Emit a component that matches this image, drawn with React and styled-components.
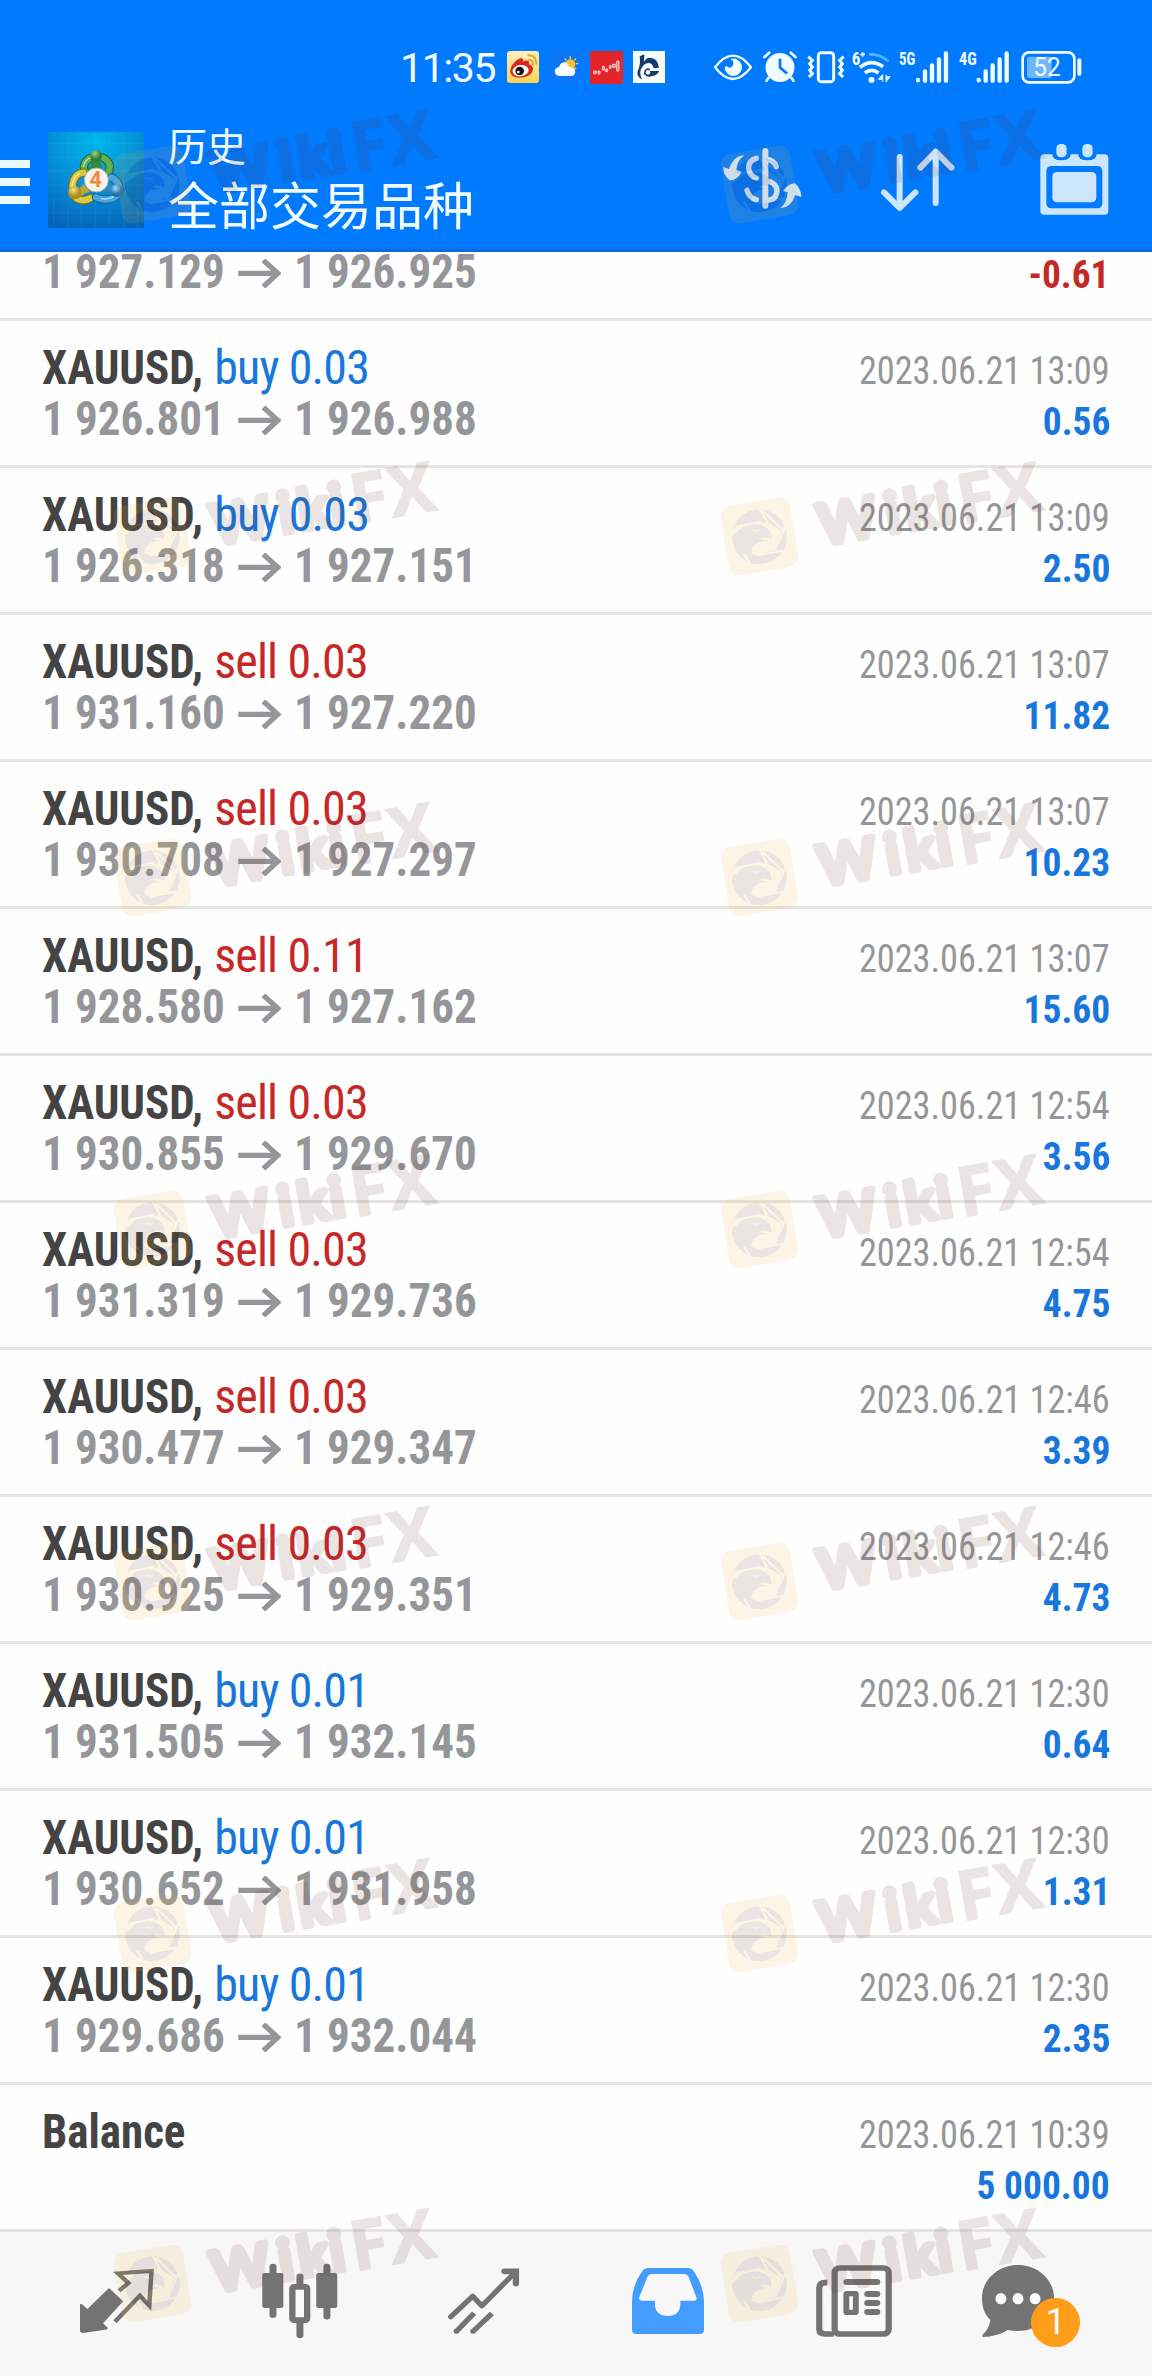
import React from "react";
import styled, { createGlobalStyle } from "styled-components";

const Global = createGlobalStyle`
  * { box-sizing: border-box; }
  body { margin: 0; background: #fefefe; }
`;

const condensed = `"Roboto Condensed", Roboto, "Noto Sans", sans-serif`;
const cjk = `"Noto Sans CJK SC", sans-serif`;

const Screen = styled.div`
  position: relative;
  width: 1152px;
  height: 2376px;
  overflow: hidden;
  display: flex;
  flex-direction: column;
  background: #fefefe;
  font-family: ${condensed};
`;

const Header = styled.header`
  height: 252px;
  flex: none;
  background: #007aff;
  border-bottom: 3px solid #0b6cd8;
  color: #f2fcff;
`;

const StatusBar = styled.div`
  height: 117px;
  padding: 51px 0 0 400px;
  display: flex;
  align-items: flex-start;
`;

const Clock = styled.span`
  width: 107px;
  height: 32px;
  line-height: 34px;
  font-family: Roboto, sans-serif;
  font-size: 41px;
  letter-spacing: -1.4px;
  white-space: nowrap;
`;

const Icon = styled.svg`
  display: block;
  flex: none;
  width: ${(p) => p.$w}px;
  height: ${(p) => p.$h}px;
  margin-left: ${(p) => p.$gap || 0}px;
  margin-top: ${(p) => p.$drop || 0}px;
  overflow: visible;
`;

const AppBar = styled.div`
  height: 132px;
  display: flex;
  align-items: flex-start;
`;

const MenuButton = styled.div`
  width: 30px;
  margin: 43px 18px 0 0;
  display: flex;
  flex-direction: column;
  gap: 10px;
`;

const MenuLine = styled.span`
  height: 8px;
  background: #eaf8ff;
`;

const AppLogo = styled.svg`
  width: 96px;
  height: 96px;
  margin-top: 15px;
  flex: none;
`;

const Titles = styled.div`
  width: 555px;
  margin-left: 24px;
  font-family: ${cjk};
`;

const Subtitle = styled.div`
  font-size: 39px;
  line-height: 54px;
`;

const Title = styled.div`
  margin-top: 1px;
  font-size: 51px;
  line-height: 62px;
`;

const History = styled.main`
  height: 1980px;
  flex: none;
  overflow: hidden;
  display: flex;
  flex-direction: column;
  justify-content: flex-end;
`;

const Row = styled.div`
  height: 147px;
  flex: none;
  padding: 21px 42px 0;
  border-bottom: 3px solid #e4e4e4;
`;

const Line = styled.div`
  height: 51px;
  display: flex;
  justify-content: space-between;
  align-items: baseline;
  line-height: 51px;
  white-space: pre;
`;

const Deal = styled.span`
  font-size: 48px;
  font-stretch: condensed;
  letter-spacing: -0.85px;
  color: ${(p) => p.$color};
`;

const Symbol = styled.b`
  display: inline-block;
  margin-right: -10.7px;
  color: #444;
  font-weight: 700;
  letter-spacing: 0;
  transform: scaleX(0.9375);
  transform-origin: left;
`;

const Prices = styled.span`
  display: flex;
  align-items: baseline;
  font-size: 48px;
  font-weight: 700;
  font-stretch: condensed;
  transform: scaleX(0.9375);
  transform-origin: left;
  color: #959699;
`;

const Arrow = styled.svg`
  width: 46px;
  height: 29px;
  margin: 0 14px 0 14px;
`;

const Time = styled.span`
  font-size: 39px;
  font-stretch: condensed;
  transform: scaleX(0.93);
  transform-origin: right;
  color: #959699;
`;

const Profit = styled.span`
  font-size: 39px;
  font-weight: 700;
  font-stretch: condensed;
  transform: scaleX(0.96);
  transform-origin: right;
  color: ${(p) => (p.$loss ? "#c62828" : "#1777dd")};
`;

const Nav = styled.nav`
  height: 144px;
  flex: none;
  padding: 0 24px 6px;
  display: flex;
  background: #f7f7f7;
`;

const Tab = styled.div`
  width: 184px;
  display: flex;
  align-items: center;
  justify-content: center;
`;

const ChatBox = styled.div`
  position: relative;
  width: 108px;
`;

const Count = styled.span`
  position: absolute;
  left: 49px;
  top: 33px;
  width: 49px;
  height: 49px;
  border-radius: 50%;
  background: #ff9d1a;
  color: #fff;
  font-family: Roboto, sans-serif;
  font-size: 36px;
  line-height: 49px;
  text-align: center;
`;

const Mark = styled.svg`
  position: absolute;
  left: ${(p) => p.$x}px;
  top: ${(p) => p.$y}px;
  width: 330px;
  height: 82px;
  overflow: visible;
  opacity: 0.12;
  pointer-events: none;
`;

const BUY = "#1777dd";
const SELL = "#c62828";

const deals = [
  ["buy 0.03", "1 927.129", "1 926.925", "2023.06.21 13:09", "-0.61"],
  ["buy 0.03", "1 926.801", "1 926.988", "2023.06.21 13:09", "0.56"],
  ["buy 0.03", "1 926.318", "1 927.151", "2023.06.21 13:09", "2.50"],
  ["sell 0.03", "1 931.160", "1 927.220", "2023.06.21 13:07", "11.82"],
  ["sell 0.03", "1 930.708", "1 927.297", "2023.06.21 13:07", "10.23"],
  ["sell 0.11", "1 928.580", "1 927.162", "2023.06.21 13:07", "15.60"],
  ["sell 0.03", "1 930.855", "1 929.670", "2023.06.21 12:54", "3.56"],
  ["sell 0.03", "1 931.319", "1 929.736", "2023.06.21 12:54", "4.75"],
  ["sell 0.03", "1 930.477", "1 929.347", "2023.06.21 12:46", "3.39"],
  ["sell 0.03", "1 930.925", "1 929.351", "2023.06.21 12:46", "4.73"],
  ["buy 0.01", "1 931.505", "1 932.145", "2023.06.21 12:30", "0.64"],
  ["buy 0.01", "1 930.652", "1 931.958", "2023.06.21 12:30", "1.31"],
  ["buy 0.01", "1 929.686", "1 932.044", "2023.06.21 12:30", "2.35"],
];

const markRows = [144, 496, 837, 1189, 1541, 1893, 2243];

function Watermark({ x, y }) {
  return (
    <Mark $x={x} $y={y} viewBox="0 0 330 82">
      <rect x="5.5" y="5.5" width="70" height="70" rx="10" fill="#f0b432" transform="rotate(-9.5 40.5 40.5)" />
      <g transform="translate(-19.5 -40.7) scale(.3333)" strokeLinecap="butt">
        <circle cx="180" cy="244" r="82" fill="#612f28" />
        <path d="M104 214 L202 200 L246 226 L226 284 L172 300 L120 290 L96 240 Z" fill="#f0b432" />
        <path
          d="M98 240 C112 232 122 222 132 214 C150 202 190 206 206 222 C214 228 218 244 214 255 C206 246 194 246 182 248 C184 254 196 256 206 257 C180 256 160 268 156 286 C154 302 166 316 182 326 C140 328 98 296 98 240 Z"
          fill="#612f28"
        />
        <path d="M158 222 Q168 232 182 224" fill="none" stroke="#f0b432" strokeWidth="4" />
        <path d="M180 160 L204 202 M108 214 L186 199 M262 204 L224 290 M250 286 L172 300 M190 166 L254 228 M134 296 L150 322" fill="none" stroke="#f0b432" strokeWidth="7" />
      </g>
      <g transform="translate(101 50.5) rotate(-9.8)" fill="#612f28">
        <text x="2 70 90 122" y="-1" fontFamily="Lato" fontWeight="700" fontSize="56" stroke="#612f28" strokeWidth="6" strokeLinejoin="round">
          Wiki
        </text>
        <text x="143 182" y="2" fontFamily="Open Sans" fontWeight="700" fontSize="69" stroke="#612f28" strokeWidth="1.500">
          FX
        </text>
      </g>
    </Mark>
  );
}

function StatusIcons() {
  const w = "#f0fcff";
  return (
    <>
      <Icon $w={32} $h={32} viewBox="0 0 96 96">
        <defs>
          <linearGradient id="weibo" x2="0" y2="1">
            <stop offset="0" stopColor="#fff0c4" />
            <stop offset="1" stopColor="#ffd34f" />
          </linearGradient>
        </defs>
        <rect width="96" height="96" rx="10" fill="url(#weibo)" />
        <path d="M10 58 C12 44 26 26 40 22 C48 21 50 26 48 32 C58 26 70 28 66 40 C80 44 82 58 72 68 C58 82 24 84 14 72 C10 67 9 63 10 58Z" fill="#db2a1c" />
        <ellipse cx="41" cy="59" rx="24" ry="17" fill="#fff" transform="rotate(-8 41 59)" />
        <circle cx="38" cy="60" r="13" fill="#15100c" />
        <circle cx="34" cy="63" r="4" fill="#fff" />
        <path d="M66 26 Q78 26 78 42 M64 13 Q88 12 88 38" fill="none" stroke="#eda42c" strokeWidth="6" strokeLinecap="round" />
      </Icon>
      <Icon $w={32} $h={32} $gap={10} viewBox="0 0 96 96">
        <rect width="96" height="96" rx="18" fill="#0a75f5" />
        <path d="M64 16v8M47 22l5 6M81 22l-5 6M88 38h-8M82 54l-6-4" stroke="#ffd34c" strokeWidth="4" />
        <circle cx="64" cy="40" r="15" fill="#ffc027" />
        <path d="M34 75 C12 75 12 50 30 48 C34 28 60 30 60 48 C84 46 84 75 66 75Z" fill="#f8fcff" />
      </Icon>
      <Icon $w={33} $h={33} $gap={9} viewBox="0 0 99 99">
        <rect width="99" height="99" rx="5" fill="#e1252b" />
        <path d="M11 60h8v8h-8zM24 60h6v9h-6zM37 46h6v11h-6zM46 54h7v8h-7zM58 44h5v8h-5zM67 40h9v9h-9zM80 30h7v30h-7z" fill="#fff" fillOpacity=".4" stroke="#fff" strokeOpacity=".85" strokeWidth="2.500" />
      </Icon>
      <Icon $w={32} $h={32} $gap={10} viewBox="0 0 96 96">
        <rect width="96" height="96" fill="#f7fdff" />
        <path d="M34 10 L20 16 Q24 40 14 60 Q10 78 28 86 Q18 70 24 54 Q34 34 48 36 Q60 38 62 52 L78 50 Q74 20 50 20 Q40 20 33 32Z" fill="#173a68" />
        <path d="M78 60 H50 Q52 50 44 52 Q32 56 33 68 Q40 80 56 76 Q76 72 78 60Z" fill="#173a68" />
        <circle cx="45" cy="64" r="7" fill="#f7fdff" />
      </Icon>
      <Icon $w={38} $h={27} $gap={49} $drop={3} viewBox="42 71 114 81">
        <path d="M45 111 Q99 41 153 111 Q99 181 45 111Z" fill="none" stroke={w} strokeWidth="7" strokeLinejoin="round" />
        <path d="M92 86 A26 26 0 1 1 74 112 Q76 108 80 107 Q90 118 98 106 Q104 92 92 86Z" fill={w} />
      </Icon>
      <Icon $w={34} $h={31} $gap={11} viewBox="190 65 100 92">
        <circle cx="240" cy="114" r="43" fill={w} />
        <path d="M194 83l14-13M286 83l-14-13M206 145l-6 8M274 145l6 8" stroke={w} strokeWidth="8" strokeLinecap="round" />
        <path d="M240 88v26l21 18" fill="none" stroke="#007aff" strokeWidth="8" />
      </Icon>
      <Icon $w={38} $h={32} $gap={10} viewBox="321 63 114 96">
        <rect x="355" y="68" width="46" height="87" rx="9" fill="none" stroke={w} strokeWidth="9" />
        <path d="M325 80l12 11-8 10 8 10-8 10 8 10-10 10M431 80l-12 11 8 10-8 10 8 10-8 10 10 10" fill="none" stroke={w} strokeWidth="9" />
      </Icon>
      <Icon $w={39} $h={32} $gap={7} viewBox="458 63 118 96">
        <text x="457" y="104" fontFamily={condensed} fontWeight="700" fontSize="54" textLength="26" lengthAdjust="spacingAndGlyphs" fill={w}>6</text>
        <path d="M483 73h14M490 66v14" stroke={w} strokeWidth="5" />
        <path d="M509 72 Q545 72 568 94" fill="none" stroke="#58b0ff" strokeWidth="8" />
        <path d="M482 112 Q516 84 552 110M497 129 Q517 113 538 129" fill="none" stroke={w} strokeWidth="11" />
        <circle cx="517" cy="150" r="9" fill={w} />
        <path d="M551 156v-22l-13 14h12M561 134v22l12-16h-11" fill={w} stroke={w} strokeWidth="3" />
      </Icon>
      <Icon $w={50} $h={32} $gap={8} viewBox="600 63 150 96">
        <text x="600" y="105" fontFamily={condensed} fontWeight="700" fontSize="57" textLength="49" lengthAdjust="spacingAndGlyphs" fill={w}>5G</text>
        <path d="M657 150v1M678 124v28M699 106v46M720 88v64M741 70v82" stroke={w} strokeWidth="13" strokeLinecap="round" />
      </Icon>
      <Icon $w={51} $h={32} $gap={10} viewBox="781 63 153 96">
        <text x="781" y="105" fontFamily={condensed} fontWeight="700" fontSize="57" textLength="53" lengthAdjust="spacingAndGlyphs" fill={w}>4G</text>
        <path d="M840 150v1M861 124v28M882 106v46M903 88v64M924 70v82" stroke={w} strokeWidth="13" strokeLinecap="round" />
      </Icon>
      <Icon $w={61} $h={32} $gap={11} viewBox="966 63 183 96">
        <rect x="971" y="67" width="155" height="90" rx="19" fill="none" stroke={w} strokeWidth="8" />
        <rect x="984" y="80" width="74" height="64" rx="7" fill="#72b5ff" />
        <path d="M1141 91v40" stroke={w} strokeWidth="12" strokeLinecap="round" />
        <text x="1003" y="138" fontFamily="Roboto" fontSize="75" textLength="82" lengthAdjust="spacingAndGlyphs" fill={w}>52</text>
      </Icon>
    </>
  );
}

function Logo() {
  return (
    <AppLogo viewBox="0 0 288 288">
      <defs>
        <radialGradient id="sky" cx=".5" cy=".1" r=".95">
          <stop offset="0" stopColor="#00b6ee" />
          <stop offset=".55" stopColor="#058bd4" />
          <stop offset="1" stopColor="#0564b8" />
        </radialGradient>
        <radialGradient id="green" cx=".4" cy=".3"><stop offset="0" stopColor="#9bd48a" /><stop offset="1" stopColor="#2a7d35" /></radialGradient>
        <radialGradient id="gold" cx=".4" cy=".3"><stop offset="0" stopColor="#f2e37c" /><stop offset="1" stopColor="#a98a1c" /></radialGradient>
        <radialGradient id="azure" cx=".4" cy=".3"><stop offset="0" stopColor="#a5dcfa" /><stop offset="1" stopColor="#1c6fae" /></radialGradient>
      </defs>
      <rect width="288" height="288" fill="url(#sky)" />
      <path d="M18 0v288M60 0v288M101 0v288M143 0v288M185 0v288M227 0v288M269 0v288M0 34h288M0 76h288M0 117h288M0 159h288M0 201h288M0 243h288" stroke="#5ccdf2" strokeOpacity=".18" strokeWidth="2" />
      <g fill="none" strokeLinejoin="round" strokeLinecap="round">
        <path d="M112 120 C98 94 122 74 146 74 C172 74 196 94 180 124" stroke="#23622b" strokeWidth="25" />
        <path d="M112 120 C98 94 122 74 146 74 C172 74 196 94 180 124" stroke="#5fb04e" strokeWidth="19" />
        <path d="M106 122 C78 124 66 158 78 190 C88 208 112 208 128 198" stroke="#7e6b16" strokeWidth="25" />
        <path d="M106 122 C78 124 66 158 78 190 C88 208 112 208 128 198" stroke="#dcc93e" strokeWidth="19" />
        <path d="M190 136 C214 148 222 176 208 190 C192 206 162 206 144 196" stroke="#1b5a91" strokeWidth="25" />
        <path d="M190 136 C214 148 222 176 208 190 C192 206 162 206 144 196" stroke="#46a6e0" strokeWidth="19" />
        <path d="M106 104 Q110 82 130 76 M72 170 Q72 138 94 124 M160 200 Q186 204 204 190" stroke="#fff" strokeOpacity=".6" strokeWidth="4" />
      </g>
      <path d="M130 84 Q132 102 122 112 H166 Q156 102 158 84Z" fill="#2f8a3b" />
      <path d="M88 172 Q102 166 106 156 L126 180 Q110 182 100 192Z" fill="#c0a62a" />
      <path d="M200 166 Q186 162 182 152 L164 176 Q180 178 192 188Z" fill="#2b86c6" />
      <circle cx="144" cy="72" r="18" fill="url(#green)" />
      <circle cx="80" cy="182" r="20" fill="url(#gold)" />
      <circle cx="206" cy="176" r="19" fill="url(#azure)" />
      <circle cx="145" cy="144" r="36" fill="#f6f2ee" stroke="#b9aca0" strokeWidth="3" />
      <text x="143" y="166" textAnchor="middle" fontFamily="Roboto" fontWeight="700" fontSize="64" fill="#ee8a3c">4</text>
    </AppLogo>
  );
}

function Actions() {
  const c = "#cce6ff";
  return (
    <>
      <Icon $w={79} $h={61} $drop={31} viewBox="128 143 237 183">
        <path d="M255 152v164" stroke={c} strokeWidth="18" strokeLinecap="round" />
        <path d="M288 199 Q280 178 255 176 M228 174 Q200 182 206 210 Q212 230 228 233 M255 241 Q288 246 290 270 Q290 298 262 300 M228 298 Q206 292 200 270" fill="none" stroke={c} strokeWidth="16" strokeLinecap="round" />
        <path d="M192 165 Q160 166 146 206 L129 200 Q128 224 148 240 Q170 240 184 214 L168 208 Q170 180 192 165Z" fill={c} />
        <path d="M300 324 Q332 322 345 284 L363 290 Q362 264 344 249 Q320 252 308 272 L322 276 Q320 308 300 324Z" fill={c} />
      </Icon>
      <Icon $w={74} $h={64} $gap={79} $drop={31} viewBox="604 143 222 192">
        <path d="M660 170v152M613 276l47 47 47-47M768 308V154M722 202l46-48 47 48" fill="none" stroke={c} strokeWidth="18" strokeLinecap="round" strokeLinejoin="round" />
      </Icon>
      <Icon $w={69} $h={71} $gap={85} $drop={27} viewBox="1079 131 207 213">
        <path fillRule="evenodd" d="M1092 162 H1116 Q1116 180 1143 180 Q1170 180 1171 162 H1194 Q1194 180 1221 180 Q1248 180 1249 162 H1272 Q1284 162 1284 174 V331 Q1284 343 1272 343 H1092 Q1080 343 1080 331 V174 Q1080 162 1092 162Z M1114 197 Q1098 197 1098 213 V308 Q1098 324 1114 324 H1250 Q1266 324 1266 308 V213 Q1266 197 1250 197Z" fill={c} />
        <rect x="1116" y="215" width="132" height="91" rx="14" fill={c} />
        <rect x="1128" y="131" width="31" height="40" rx="14" fill={c} />
        <rect x="1206" y="131" width="31" height="40" rx="14" fill={c} />
      </Icon>
    </>
  );
}

function Tabs() {
  const g = "#737373";
  return (
    <Nav>
      <Tab>
        <Icon $w={73} $h={63} viewBox="216 183 196 189" preserveAspectRatio="none">
          <path d="M294 237 L332 277 L278 343 L291 357 Q290 362 284 362 L224 372 Q216 372 216 364 V286 Q220 284 224 288 L236 300Z" fill={g} />
          <path d="M321 245 L346 222 L318 193 L408 186 L402 290 L377 260 L310 338" fill="none" stroke={g} strokeWidth="12" />
        </Icon>
      </Tab>
      <Tab>
        <Icon $w={75} $h={74} viewBox="710 165 203 222" preserveAspectRatio="none">
          <path d="M737 174v143M883 174v148M810 203v24M810 342v36" stroke={g} strokeWidth="19" strokeLinecap="round" />
          <rect x="708" y="192" width="57" height="105" rx="6" fill={g} />
          <rect x="854" y="192" width="57" height="105" rx="6" fill={g} />
          <rect x="789.500" y="233.500" width="40" height="100" rx="5" fill="#f9f9f9" stroke={g} strokeWidth="17" />
        </Icon>
      </Tab>
      <Tab>
        <Icon $w={71} $h={66} viewBox="1213 173 192 199" preserveAspectRatio="none">
          <path d="M1218 320 L1277 258 L1302 287 L1394 184" fill="none" stroke={g} strokeWidth="15" strokeLinecap="round" strokeLinejoin="round" />
          <path d="M1363 183H1394V220" fill="none" stroke={g} strokeWidth="17" strokeLinecap="round" />
          <path d="M1233 364L1281 309M1278 364L1329 310" stroke={g} strokeWidth="15" />
          <circle cx="1233" cy="364" r="7.500" fill={g} />
          <circle cx="1278" cy="364" r="7.500" fill={g} />
        </Icon>
      </Tab>
      <Tab>
        <Icon $w={72} $h={66} viewBox="144 174 198 198" preserveAspectRatio="none">
          <path fillRule="evenodd" d="M188 174H298Q308 174 314 184Q342 230 342 276V360Q342 372 330 372H156Q144 372 144 360V276Q144 226 172 184Q178 174 188 174Z M200 192Q190 192 186 202L164 262Q162 272 172 272H207V282Q208 318 242 318Q276 318 277 282V272H316Q324 271 321 262L300 202Q296 192 286 192Z" fill="#449cfc" />
        </Icon>
      </Tab>
      <Tab>
        <Icon $w={76} $h={72} $gap={4} viewBox="647 165 208 216" preserveAspectRatio="none">
          <path d="M678 218H672Q656 218 656 234V358Q656 372 672 372H696" fill="#f9f9f9" stroke={g} strokeWidth="17" />
          <rect x="698" y="174" width="148" height="198" rx="14" fill="#f9f9f9" stroke={g} strokeWidth="17" />
          <path d="M731 216h83M788 252h26M788 279h26M788 306h26" stroke={g} strokeWidth="18" strokeLinecap="round" />
          <rect x="730" y="251" width="26" height="56" rx="2" fill="#f9f9f9" stroke={g} strokeWidth="16" />
        </Icon>
      </Tab>
      <Tab>
        <ChatBox>
          <Icon $w={72} $h={72} viewBox="1102 165 198 216" preserveAspectRatio="none">
            <path d="M1201 165 C1256 165 1300 210 1300 264 C1300 332 1240 375 1172 360 C1152 374 1130 380 1106 381 Q1100 379 1104 374 Q1122 356 1125 330 C1108 312 1102 290 1102 264 C1102 210 1146 165 1201 165Z" fill={g} />
            <ellipse cx="1154" cy="266" rx="15" ry="17" fill="#fafafa" />
            <ellipse cx="1201" cy="266" rx="15" ry="17" fill="#fafafa" />
            <ellipse cx="1248" cy="266" rx="15" ry="17" fill="#fafafa" />
          </Icon>
          <Count>1</Count>
        </ChatBox>
      </Tab>
    </Nav>
  );
}

export default function App() {
  return (
    <Screen>
      <Global />
      <Header>
        <StatusBar>
          <Clock>11:35</Clock>
          <StatusIcons />
        </StatusBar>
        <AppBar>
          <MenuButton>
            <MenuLine />
            <MenuLine />
            <MenuLine />
          </MenuButton>
          <Logo />
          <Titles>
            <Subtitle>历史</Subtitle>
            <Title>全部交易品种</Title>
          </Titles>
          <Actions />
        </AppBar>
      </Header>
      <History>
        {deals.map(([side, from, to, time, profit], i) => (
          <Row key={i}>
            <Line>
              <Deal $color={side.startsWith("buy") ? BUY : SELL}>
                <Symbol>XAUUSD, </Symbol>
                {side}
              </Deal>
              <Time>{time}</Time>
            </Line>
            <Line>
              <Prices>
                {from}
                <Arrow viewBox="0 0 129 87" preserveAspectRatio="none">
                  <path d="M1 43h118M76 4l43 39-43 40" fill="none" stroke="#959699" strokeWidth="16" />
                </Arrow>
                {to}
              </Prices>
              <Profit $loss={profit.startsWith("-")}>{profit}</Profit>
            </Line>
          </Row>
        ))}
        <Row>
          <Line>
            <Deal>
              <Symbol>Balance</Symbol>
            </Deal>
            <Time>2023.06.21 10:39</Time>
          </Line>
          <Line>
            <Deal>{" "}</Deal>
            <Profit>5 000.00</Profit>
          </Line>
        </Row>
      </History>
      <Tabs />
      {markRows.map((y) => (
        <React.Fragment key={y}>
          <Watermark x={112} y={y} />
          <Watermark x={719} y={y} />
        </React.Fragment>
      ))}
    </Screen>
  );
}
